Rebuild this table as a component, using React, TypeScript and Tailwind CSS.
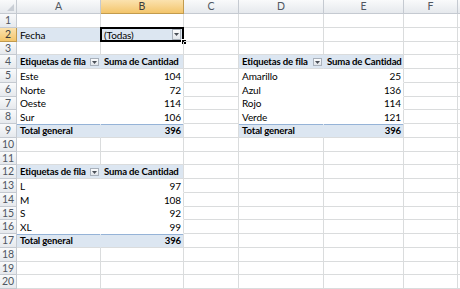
import type { ReactNode } from 'react';

type Cell = {
  text?: string;
  bold?: boolean;
  right?: boolean;
  band?: boolean;
  total?: boolean;
  header?: boolean;
  noRight?: boolean;
  noBottom?: boolean;
  drop?: boolean;
};

const COLS = ['A', 'B', 'C', 'D', 'E', 'F', 'G'];
const ROWS = Array.from({ length: 20 }, (_, i) => i + 1);

const cells: Record<string, Cell> = {};

function pivot(col1: string, col2: string, top: number, items: [string, number][], total: number) {
  cells[`${col1}${top}`] = { text: 'Etiquetas de fila', bold: true, band: true, header: true, noRight: true, drop: true };
  cells[`${col2}${top}`] = { text: 'Suma de Cantidad', bold: true, band: true, header: true };
  items.forEach(([label, v], i) => {
    const r = top + 1 + i;
    cells[`${col1}${r}`] = { text: label, noRight: true, noBottom: true };
    cells[`${col2}${r}`] = { text: String(v), right: true, noBottom: true };
  });
  const tr = top + 1 + items.length;
  cells[`${col1}${tr}`] = { text: 'Total general', bold: true, band: true, total: true, noRight: true };
  cells[`${col2}${tr}`] = { text: String(total), bold: true, right: true, band: true, total: true };
}

pivot('A', 'B', 4, [['Este', 104], ['Norte', 72], ['Oeste', 114], ['Sur', 106]], 396);
pivot('D', 'E', 4, [['Amarillo', 25], ['Azul', 136], ['Rojo', 114], ['Verde', 121]], 396);
pivot('A', 'B', 12, [['L', 97], ['M', 108], ['S', 92], ['XL', 99]], 396);
cells['A2'] = { text: 'Fecha', band: true, noRight: true };
cells['B2'] = { text: '(Todas)', band: true, drop: true };

function DropButton({ tall }: { tall?: boolean }) {
  return (
    <span
      className={`flex shrink-0 items-center justify-center border border-[#a9b1bb] bg-gradient-to-b from-[#fbfcfd] to-[#e2e6eb] ${
        tall ? 'h-[11px] w-[9px]' : 'h-[8px] w-[9px]'
      }`}
    >
      <svg width="5" height="3" viewBox="0 0 5 3">
        <path d="M0 0h5L2.5 3z" fill="#4a4f57" />
      </svg>
    </span>
  );
}

function HeaderCell({ children, active }: { children?: ReactNode; active?: boolean }) {
  return (
    <div
      className={`flex items-center justify-center border-r border-b text-[10.5px] leading-none ${
        active
          ? 'border-[#c29b4e] bg-gradient-to-b from-[#fbe2ae] to-[#f3c56a] text-[#3b3b3b]'
          : 'border-[#c5cad1] bg-gradient-to-b from-[#f9fafb] to-[#e6e9ed] text-[#4f5661]'
      }`}
    >
      {children}
    </div>
  );
}

export default function App() {
  return (
    <div
      className="h-[289px] w-[460px] overflow-hidden bg-white text-black"
      style={{ fontFamily: 'Lato, "Open Sans", sans-serif' }}
    >
      <div className="grid grid-cols-[17px_84px_83px_55px_85px_80px_54px_1fr] grid-rows-[14px_repeat(20,13.75px)]">
        <div className="flex items-end justify-end border-r border-b border-[#c5cad1] bg-gradient-to-b from-[#f9fafb] to-[#e6e9ed] p-[2px]">
          <svg width="7" height="7" viewBox="0 0 7 7">
            <path d="M7 0v7H0z" fill="#c9ced5" />
          </svg>
        </div>
        {COLS.map((c) => (
          <HeaderCell key={c} active={c === 'B'}>
            {c === 'G' ? '' : c}
          </HeaderCell>
        ))}
        {ROWS.map((r) => (
          <Row key={r} r={r} />
        ))}
      </div>
    </div>
  );
}

function Row({ r }: { r: number }) {
  return (
    <>
      <HeaderCell active={r === 2}>{r}</HeaderCell>
      {COLS.map((c) => {
        const cell = cells[`${c}${r}`] || {};
        const selected = c === 'B' && r === 2;
        return (
          <div
            key={c}
            className={`relative flex items-center gap-[2px] whitespace-nowrap pl-[3px] pt-[1px] leading-none ${
              cell.right ? 'justify-end pr-[2px]' : cell.drop ? 'justify-between pr-[1px]' : 'pr-[3px]'
            } ${selected ? 'pr-[2px] pt-0' : ''} ${
              cell.bold ? 'text-[9.6px] font-bold tracking-[-0.15px]' : 'text-[10px] tracking-[-0.1px]'
            } ${cell.band ? 'bg-[#dce6f1]' : ''} ${
              cell.noRight ? 'border-r border-r-transparent' : 'border-r border-r-[#dadcdd]'
            } ${cell.noBottom ? 'border-b border-b-transparent' : 'border-b border-b-[#dadcdd]'} ${
              cell.total ? 'shadow-[inset_0_1px_0_#95b3d7]' : ''
            } ${cell.header ? 'border-b-[#c5d5e8]' : ''}`}
          >
            <span>{cell.text}</span>
            {cell.drop && <DropButton tall={selected} />}
            {selected && (
              <>
                <span className="pointer-events-none absolute -left-[1px] -top-[1px] bottom-[-1px] right-[-1px] border-2 border-black" />
                <span className="absolute bottom-[-4px] right-[-4px] h-[6px] w-[6px] border border-white bg-black" />
              </>
            )}
          </div>
        );
      })}
    </>
  );
}
